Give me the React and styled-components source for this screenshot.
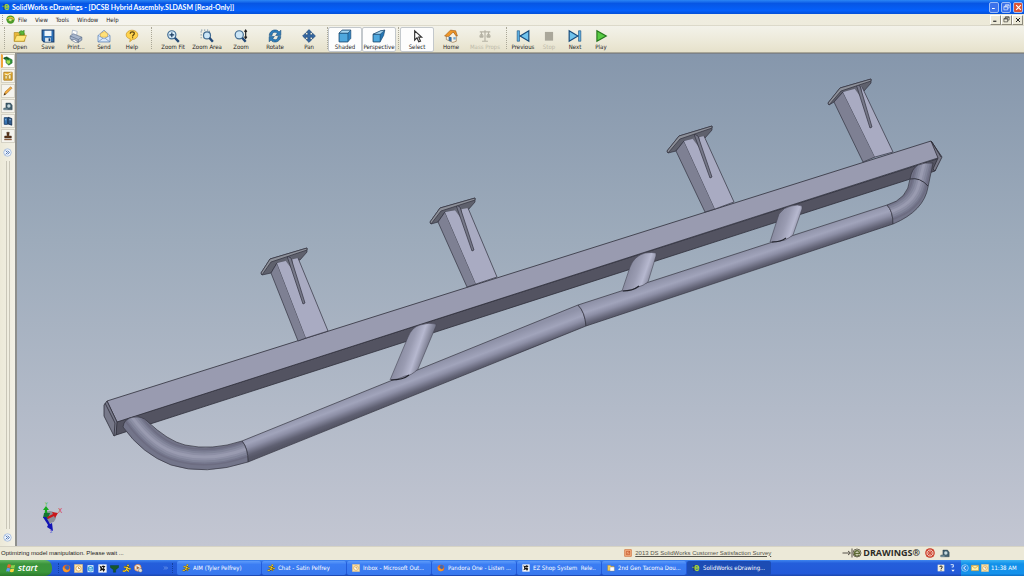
import styled, { createGlobalStyle } from "styled-components";

const GlobalStyle = createGlobalStyle`
    * {
        box-sizing: border-box;
    }

    body {
        margin: 0;
        font-family: "DejaVu Sans Condensed", "Liberation Sans", sans-serif;
        font-size: 6px;
        line-height: 8px;
        color: #222;
    }

    button {
        font: inherit;
        color: inherit;
        padding: 0;
        border: 0;
        background: none;
    }

    svg {
        display: block;
        flex-shrink: 0;
    }
`;

const Window = styled.div`
    height: 100vh;
    display: flex;
    flex-direction: column;
    background-color: #ece9d8;
    overflow: hidden;
`;

// title bar
const TitleBar = styled.header`
    height: 14px;
    flex-shrink: 0;
    display: flex;
    align-items: center;
    padding: 0 1px 0 2px;
    gap: 2px;
    background: linear-gradient(#2c86f5, #0756e4 25%, #0560fb 75%, #0450d8);

    h1 {
        flex: 1;
        margin: 0;
        color: white;
        font-family: "Lato", sans-serif;
        font-size: 7px;
        line-height: 10px;
        font-weight: 700;
        white-space: nowrap;
    }
`;

const CaptionBtn = styled.button`
    width: 10px;
    height: 11px;
    display: flex;
    align-items: center;
    justify-content: center;
    border: 1px solid #9dbcf5;
    border-radius: 2px;
    color: white;
    background: ${(props) => (props.$close ? "#dd5434" : "#3c72ea")};
`;

// menu
const MenuBar = styled.nav`
    height: 12px;
    flex-shrink: 0;
    display: flex;
    align-items: center;
    padding: 0 1px 0 2px;
    gap: 3px;
    background: linear-gradient(90deg, #f6f5f0, #ece9d8);
    border-bottom: 1px solid #dcd9ca;
`;

const MenuItems = styled.div`
    flex: 1;
    display: flex;
    gap: 8px;
`;

const ChildButtons = styled.div`
    display: flex;
`;

const ChildBtn = styled.button`
    width: 11px;
    height: 10px;
    display: flex;
    align-items: center;
    justify-content: center;
    border: 1px solid #fff;
    border-right-color: #8d8a7c;
    border-bottom-color: #8d8a7c;
`;

const Grip = styled.span`
    width: 1px;
    height: ${(props) => props.$height}px;
    margin: 0 ${(props) => props.$gap || 0}px;
    border-left: 1px dotted ${(props) => props.$color || "#aaa797"};
`;

// toolbar
const Toolbar = styled.div`
    height: 27px;
    flex-shrink: 0;
    display: flex;
    align-items: center;
    gap: 1px;
    padding-left: 3px;
    background: linear-gradient(#f3f2ea, #ece9d8 60%, #e6e1cb);
    border-bottom: 1px solid #a9a696;
`;

const ToolGroup = styled.div`
    display: flex;
`;

const ToolBtn = styled.button`
    width: ${(props) => props.$width}px;
    height: 25px;
    display: flex;
    flex-direction: column;
    align-items: center;
    justify-content: flex-end;
    white-space: nowrap;
    border: 1px solid ${(props) => (props.$pressed ? "#c3c8cc" : "transparent")};
    border-radius: 2px;
    background-color: ${(props) => (props.$pressed ? "#fdfdfd" : "transparent")};
    color: ${(props) => (props.disabled ? "#bdbaaa" : "#222")};
`;

// body
const Body = styled.div`
    flex: 1;
    min-height: 0;
    display: flex;
`;

const SideBar = styled.aside`
    width: 17px;
    flex-shrink: 0;
    display: flex;
    flex-direction: column;
    align-items: center;
    padding-top: 1px;
    background: linear-gradient(90deg, #ece9d8, #f3f1e6);
    border-right: 2px solid #8e8f8c;
`;

const SideTab = styled.button`
    width: 14px;
    height: 14px;
    margin-bottom: 1px;
    display: flex;
    align-items: center;
    justify-content: center;
    background-color: ${(props) => (props.$active ? "#fff" : "#f5f4ee")};
    border: 1px solid #d5d2c5;
    border-left: ${(props) => (props.$active ? "2px solid #f0a53c" : "1px solid #d5d2c5")};
`;

const Expander = styled.button`
    margin: 4px 0;
`;

const SideRail = styled.div`
    flex: 1;
    width: 4px;
    border-left: 1px solid #c9c6b8;
    border-right: 1px solid #c9c6b8;
`;

const Viewport = styled.main`
    flex: 1;
    min-width: 0;
    border-top: 1px solid #7c828a;
    background: linear-gradient(#8697ac, #9dabbb 38%, #b2bac8 72%, #c3c6d2);

    svg {
        width: 100%;
        height: 100%;
    }
`;

// status
const StatusBar = styled.footer`
    height: 14px;
    flex-shrink: 0;
    display: flex;
    align-items: center;
    padding: 0 74px 2px 1px;
    gap: 5px;
    border-top: 1px solid #d6d3c5;
    background-color: #ece9d8;
    font-family: "Liberation Sans", sans-serif;
    white-space: nowrap;

    p {
        flex: 1;
        margin: 0;
    }
`;

const Survey = styled.a`
    display: flex;
    align-items: center;
    gap: 3px;
    margin-right: 66px;
    color: #55534a;
`;

const Brand = styled.strong`
    display: flex;
    align-items: center;
    gap: 1px;
    font-family: "Open Sans", sans-serif;
    font-size: 9px;
    line-height: 10px;
    color: #2c2b27;
`;

// taskbar
const TaskBar = styled.div`
    height: 16px;
    flex-shrink: 0;
    display: flex;
    align-items: center;
    background: linear-gradient(#3f86f0, #245edb 20%, #2259d8 85%, #1b46ab);
    color: white;
`;

const StartBtn = styled.button`
    width: 52px;
    height: 16px;
    display: flex;
    align-items: center;
    gap: 2px;
    padding-left: 6px;
    border-radius: 0 7px 7px 0;
    background: linear-gradient(#64b765, #3b943b 25%, #3a963b 75%, #2b7a2c);
    color: white;
    font-family: "Open Sans", sans-serif;
    font-size: 9px;
    line-height: 12px;
    font-weight: 600;
    font-style: italic;
`;

const QuickLaunch = styled.div`
    width: 115px;
    display: flex;
    align-items: center;
    gap: 3px;
    margin: 0 4px 0 6px;
`;

const More = styled.span`
    margin-left: auto;
`;

const Tasks = styled.div`
    flex: 1;
    display: flex;
    gap: 1px;
`;

const TaskBtn = styled.button`
    flex: 0 1 84px;
    min-width: 0;
    height: 14px;
    display: flex;
    align-items: center;
    gap: 3px;
    padding: 0 5px;
    border-radius: 2px;
    background: ${(props) => (props.$active ? "#1c4cb4" : "linear-gradient(#5d9bfa, #3b7df3 25%, #3878ee)")};

    span {
        overflow: hidden;
        white-space: pre;
    }
`;

const TrayTools = styled.div`
    display: flex;
    align-items: center;
    gap: 4px;
    margin-right: 4px;
`;

const Tray = styled.div`
    width: 63px;
    height: 16px;
    display: flex;
    align-items: center;
    gap: 2px;
    background: linear-gradient(#3bb4f4, #1290e9 25%, #1492ec 85%, #0e6fc4);
`;

const ICONS = {
    open: (
        <>
            <path d="M2 6h7l2 2h9v13H2z" fill="#e9b93c" stroke="#a67c14" />
            <path d="M6 11h17l-4 10H2z" fill="#ffe67a" stroke="#b08516" />
            <path d="M10 7c1-4 5-5 7-3l2-2v8h-8l3-2c-1-1-2-1-4-1z" fill="#5cb83a" stroke="#2f7d1c" />
        </>
    ),
    save: (
        <>
            <path d="M2 2h20v20H5l-3-3z" fill="#2b6fb5" stroke="#173f73" strokeWidth="2" />
            <path d="M6 3h12v9H6z" fill="#eef5fb" />
            <path d="M7 15h10v7H7z" fill="#dde6ee" />
            <path d="M13 16h3v5h-3z" fill="#173f73" />
        </>
    ),
    print: (
        <>
            <path d="M6 2l8 2-1 8-8-3z" fill="#fff" stroke="#8296b5" />
            <path d="M2 12l5-4 15 6v5l-6 4L2 17z" fill="#a7b5cc" stroke="#50627f" />
            <path d="M2 12l14 6 6-4M16 18v5" fill="none" stroke="#50627f" />
            <path d="M9 18l7 4-5 1-7-4z" fill="#fff" stroke="#50627f" />
        </>
    ),
    send: (
        <>
            <path d="M2 11L12 2l10 9v11H2z" fill="#dfebfa" stroke="#4d75ad" />
            <path d="M6 8l7-4 5 4v6H6z" fill="#ffe17a" stroke="#d69e2c" />
            <path d="M2 11v11h20V11l-10 6z" fill="#dbe9fa" stroke="#5f86bb" />
            <path d="M2 22l8-6M22 22l-8-6" fill="none" stroke="#4d75ad" />
        </>
    ),
    help: (
        <>
            <path d="M12 2c6 0 10 4 10 8s-4 8-9 8l-5 4 1-5c-4-1-7-3-7-7 0-4 4-8 10-8z" fill="#ffd34d" stroke="#bd8614" />
            <path d="M9 8c0-4 7-4 7 0 0 2-3 2-3 5" fill="none" stroke="#594311" strokeWidth="2" />
            <path d="M12 14h2v2h-2z" fill="#594311" />
        </>
    ),
    zoomFit: (
        <>
            <circle cx="10" cy="10" r="7" fill="#d8ecf9" stroke="#416b91" strokeWidth="2" />
            <path d="M15 15l7 7" stroke="#234a79" strokeWidth="4" />
            <path d="M10 6v8M6 10h8" stroke="#16395f" strokeWidth="2" fill="none" />
        </>
    ),
    zoomArea: (
        <>
            <path d="M2 2h14v13H2z" fill="none" stroke="#8298ad" strokeWidth="2" strokeDasharray="2 3" />
            <circle cx="12" cy="11" r="6" fill="#cce6f7" stroke="#416b91" strokeWidth="2" />
            <path d="M16 15l6 7" stroke="#234a79" strokeWidth="4" />
        </>
    ),
    zoom: (
        <>
            <circle cx="9" cy="10" r="7" fill="#cce6f7" stroke="#416b91" strokeWidth="2" />
            <path d="M14 15l6 7" stroke="#234a79" strokeWidth="4" />
            <path d="M20 2v14M18 5l2-3 2 3M18 13l2 3 2-3" stroke="#222" fill="none" strokeWidth="2" />
        </>
    ),
    rotate: (
        <>
            <path d="M2 11C3 1 15-1 19 5l3-3v9h-9l3-3C13 4 7 5 7 11z" fill="#2f7db8" stroke="#174b7c" />
            <path d="M22 13c-1 10-13 12-17 6l-3 3v-9h9l-3 3c3 4 9 3 9-3z" fill="#2f7db8" stroke="#174b7c" />
        </>
    ),
    pan: (
        <path
            d="M12 1l5 5h-3v4h4V7l5 5-5 5v-3h-4v4h3l-5 5-5-5h3v-4H6v3l-5-5 5-5v3h4V6H7z"
            fill="#3568a3"
            stroke="#17406f"
        />
    ),
    shaded: (
        <>
            <path d="M2 7l5-5h15v14l-5 6H2z" fill="#2e84c4" stroke="#153f65" />
            <path d="M2 7h15v15H2z" fill="#4fa8de" stroke="#153f65" />
            <path d="M2 7l5-5h15l-5 5z" fill="#a5d7f3" stroke="#153f65" />
        </>
    ),
    perspective: (
        <>
            <path d="M2 9L15 3l7-1-2 9-6 11H2z" fill="#2476b4" stroke="#153f65" />
            <path d="M2 9h12v13H2z" fill="#4fa8de" stroke="#153f65" />
            <path d="M2 9l13-6 7-1-8 7z" fill="#a5d7f3" stroke="#153f65" />
        </>
    ),
    select: <path d="M8 3v16l4-4 3 7 3-1-3-7h5z" fill="#fff" stroke="#333" strokeWidth="2" />,
    home: (
        <>
            <path d="M4 11l10-8 7 8v10l-6 2-11-5z" fill="#f6f1e4" stroke="#8a6231" />
            <path d="M1 12L11 2l9 1 3 9-3-1-4-6-8 8z" fill="#ef9626" stroke="#9c5410" />
            <path d="M8 13l5 1v8l-5-2z" fill="#386fa5" />
            <path d="M16 14h4v4h-4z" fill="#71a9d5" />
        </>
    ),
    mass: (
        <path
            d="M12 2v20M3 5h18M6 5v7M18 5v7M2 12h8M14 12h8M3 14h6M15 14h6M7 21h10M8 9l-2 3-2-3M20 9l-2 3-2-3"
            fill="none"
            stroke="#b5b2a4"
            strokeWidth="2"
        />
    ),
    previous: (
        <>
            <path d="M2 3h4v18H2z" fill="#5aaee2" stroke="#174b7c" />
            <path d="M22 3v18L7 12z" fill="#71c3ed" stroke="#174b7c" strokeWidth="2" />
        </>
    ),
    stop: <path d="M5 5h14v15H5z" fill="#aaa79a" />,
    next: (
        <>
            <path d="M18 3h4v18h-4z" fill="#5aaee2" stroke="#174b7c" />
            <path d="M2 3v18l15-9z" fill="#71c3ed" stroke="#174b7c" strokeWidth="2" />
        </>
    ),
    play: <path d="M5 3v18l16-9z" fill="#58cb43" stroke="#24761b" strokeWidth="2" />,
    edrawings: (
        <>
            <path d="M1 10h7" stroke="#9bd34c" strokeWidth="3" />
            <path d="M8 12h12c0-10-12-9-12 0 0 9 10 9 12 4" fill="none" stroke="#a9d836" strokeWidth="4" />
            <path d="M6 3v18" stroke="#223" strokeWidth="2" />
        </>
    ),
    document: (
        <>
            <circle cx="12" cy="12" r="11" fill="#4b9c28" />
            <path d="M2 11c5-9 16-8 20 0l-8 3-6-4z" fill="#f1c438" />
            <path d="M8 8l9 2-3 8-8-3z" fill="#d3ed87" stroke="#2c671b" />
        </>
    ),
    model: (
        <>
            <path d="M1 5l8-3 13 7v8l-8 5-7-6V11z" fill="#34963c" stroke="#174c20" />
            <path d="M9 10l8 1v6l-5 2-4-4z" fill="#a4dc4f" />
            <path d="M2 6l6-2 6 4" stroke="#174c20" strokeWidth="3" fill="none" />
        </>
    ),
    sheets: (
        <>
            <path d="M2 3h20v19H2z" fill="#f3bb35" stroke="#a77416" strokeWidth="2" />
            <path d="M5 11h5v8H5zM13 9h6v10h-6z" fill="#fff3bb" stroke="#765515" />
            <path d="M4 7l7 2 9-5" stroke="#fff" strokeWidth="2" fill="none" />
        </>
    ),
    pencil: (
        <>
            <path d="M2 22l3-8L18 2l4 3L9 18z" fill="#f0ab3f" stroke="#935b1a" />
            <path d="M2 22l2-5 3 3z" fill="#30230f" />
        </>
    ),
    measure: (
        <>
            <path d="M7 5h11l4 5v11H2v-4h5z" fill="#43606f" stroke="#1d3441" />
            <circle cx="14" cy="12" r="4" fill="#c7d9df" />
            <path d="M1 18h10v3H1z" fill="#7f9aa5" />
        </>
    ),
    section: (
        <>
            <path d="M3 4h8v16H3z" fill="#3a76b4" stroke="#173c66" strokeWidth="2" />
            <path d="M12 3l9 3v16l-9-3z" fill="#315c8d" stroke="#122e50" strokeWidth="2" />
            <path d="M15 9h4M5 9h3" stroke="#b4d6ef" strokeWidth="2" />
        </>
    ),
    stamp: (
        <>
            <path d="M9 3h6l-1 9h6v5H4v-5h6z" fill="#60391f" stroke="#2c190b" />
            <path d="M3 19h18v3H3z" fill="#8a5c40" />
        </>
    ),
    expand: (
        <>
            <circle cx="12" cy="12" r="10" fill="#edf4fd" stroke="#9cb6db" strokeWidth="2" />
            <path d="M7 7l5 5-5 5M12 7l5 5-5 5" fill="none" stroke="#24509a" strokeWidth="2" />
        </>
    ),
    flag: (
        <>
            <path d="M4 4c3-2 5-1 8 0l-2 8c-3-1-5-2-8 0z" fill="#ef6331" />
            <path d="M13 5c3 1 5 1 9-1l-2 8c-3 2-6 1-9 0z" fill="#8fd14b" />
            <path d="M2 13c3-2 5-1 8 0l-2 8c-3-1-5-2-8 0z" fill="#5d9cf0" />
            <path d="M11 14c3 1 5 1 9-1l-2 8c-3 2-6 1-9 0z" fill="#fbd33b" />
        </>
    ),
    firefox: (
        <>
            <circle cx="12" cy="12" r="10" fill="#e76722" />
            <circle cx="14" cy="9" r="6" fill="#3a6abb" />
            <path d="M3 6c1 8 7 5 9 10 3 1 6 0 9-4-1 6-5 10-10 10C4 21 0 13 3 6z" fill="#f39a2b" />
        </>
    ),
    outlook: (
        <>
            <path d="M1 1h22v22H1z" fill="#f9e3ab" stroke="#e9b560" />
            <circle cx="12" cy="12" r="7" fill="#fffbe8" stroke="#dd9c3d" strokeWidth="2" />
            <path d="M12 8v4h4" fill="none" stroke="#b07b2c" strokeWidth="2" />
        </>
    ),
    explorer: (
        <>
            <path d="M4 3h16v19H4z" fill="#d9effb" />
            <path d="M6 13h12c0-9-12-8-12 0 0 7 9 7 12 3" fill="none" stroke="#3aa5dc" strokeWidth="3" />
        </>
    ),
    shop: (
        <>
            <path d="M1 1h22v22H1z" fill="#f8f8f8" />
            <path d="M4 4l5 3 4-3 7 2-5 5 4 3-4 7-3-5-8 3 3-6z" fill="#111" />
            <circle cx="12" cy="10" r="2" fill="#fff" />
        </>
    ),
    tree: <path d="M1 4h22v5l-8 6v7H9v-7L1 9z" fill="#165829" stroke="#0b3b24" />,
    aim: (
        <>
            <circle cx="16" cy="4" r="3" fill="#fbd62e" stroke="#50420a" />
            <path d="M5 8l9 1-2 5 6 6M12 14l-4 5H2M13 9l6 4h4" fill="none" stroke="#50420a" strokeWidth="5" />
            <path d="M5 8l9 1-2 5 6 6M12 14l-4 5H2M13 9l6 4h4" fill="none" stroke="#fbd62e" strokeWidth="3" />
        </>
    ),
    player: (
        <>
            <circle cx="10" cy="10" r="9" fill="#f0e9de" stroke="#df7b33" strokeWidth="2" />
            <path d="M7 5v10l8-5z" fill="#a26539" />
            <circle cx="17" cy="17" r="5" fill="#ddd" stroke="#555" />
        </>
    ),
    folder: (
        <>
            <path d="M2 4h8l2 3h9v13H2z" fill="#f6ce5c" stroke="#a77a1a" />
            <path d="M9 9h13v12H9z" fill="#fff" stroke="#8a7f67" />
        </>
    ),
    mail: (
        <>
            <path d="M1 4h22v16H1z" fill="#fff1a8" stroke="#d79f32" strokeWidth="2" />
            <path d="M2 5l10 8 10-8" fill="none" stroke="#c18c2d" strokeWidth="2" />
        </>
    ),
    back: (
        <>
            <circle cx="12" cy="12" r="10" fill="#2b8ce8" stroke="#b6e0fb" strokeWidth="2" />
            <path d="M14 6l-6 6 6 6" stroke="#fff" strokeWidth="3" fill="none" />
        </>
    ),
    keyboard: (
        <>
            <path d="M2 2h20v20H2z" fill="#f2ecd9" />
            <path d="M8 9c0-4 8-4 8 0 0 3-4 3-4 6M12 17v3" fill="none" stroke="#222" strokeWidth="3" />
        </>
    ),
    arrows: (
        <>
            <path d="M5 2h8v7H8" fill="none" stroke="#d7e5fb" strokeWidth="3" />
            <path d="M7 17h10l-5 6z" fill="#fff" />
        </>
    ),
    survey: (
        <>
            <path d="M2 2h20v20H2z" fill="#f8b68a" stroke="#c9602b" strokeWidth="2" />
            <path d="M7 7h10v10H7zM10 12l2 2 5-7" fill="none" stroke="#b9481c" strokeWidth="2" />
        </>
    ),
    target: (
        <>
            <circle cx="12" cy="12" r="10" fill="#f2c7ba" stroke="#ca3b28" strokeWidth="3" />
            <circle cx="12" cy="12" r="5" fill="none" stroke="#ca3b28" strokeWidth="2" />
            <path d="M4 4l16 16M20 4L4 20" stroke="#ca3b28" strokeWidth="2" />
        </>
    ),
    minimize: <path d="M4 18h11" stroke="currentColor" strokeWidth="4" />,
    restore: <path d="M8 8V3h13v11h-5M3 9h13v11H3zM3 10h13M8 4h13" fill="none" stroke="currentColor" strokeWidth="2" />,
    close: <path d="M4 4l16 16M20 4L4 20" stroke="currentColor" strokeWidth="4" />,
    chevrons: <path d="M4 6l6 6-6 6M12 6l6 6-6 6" fill="none" stroke="#b5d0fa" strokeWidth="2" />,
};

function Icon({ name, size }) {
    return (
        <svg width={size} height={size} viewBox="0 0 24 24" aria-hidden="true">
            {ICONS[name]}
        </svg>
    );
}

const TOOL_GROUPS = [
    {
        width: 28,
        gap: 1,
        items: [
            ["open", "Open"],
            ["save", "Save"],
            ["print", "Print..."],
            ["send", "Send"],
            ["help", "Help"],
        ],
    },
    {
        width: 34,
        gap: 4,
        items: [
            ["zoomFit", "Zoom Fit"],
            ["zoomArea", "Zoom Area"],
            ["zoom", "Zoom"],
            ["rotate", "Rotate"],
            ["pan", "Pan"],
        ],
    },
    {
        width: 34,
        gap: 0,
        items: [
            ["shaded", "Shaded", "pressed"],
            ["perspective", "Perspective", "pressed"],
        ],
    },
    {
        width: 34,
        gap: 1,
        items: [
            ["select", "Select", "pressed"],
            ["home", "Home"],
            ["mass", "Mass Props", "disabled"],
        ],
    },
    {
        width: 26,
        gap: 3,
        items: [
            ["previous", "Previous"],
            ["stop", "Stop", "disabled"],
            ["next", "Next"],
            ["play", "Play"],
        ],
    },
];

const SIDE_TABS = [
    ["model", "Components"],
    ["sheets", "Sheets"],
    ["pencil", "Markup"],
    ["measure", "Measure"],
    ["section", "Section"],
    ["stamp", "Stamp"],
];

const QUICK = ["firefox", "outlook", "explorer", "shop", "tree", "aim", "player"];

const TASKS = [
    ["aim", "AIM (Tyler Pelfrey)"],
    ["aim", "Chat - Satin Pelfrey"],
    ["outlook", "Inbox - Microsoft Out..."],
    ["firefox", "Pandora One - Listen ..."],
    ["shop", "EZ Shop System  Rele..."],
    ["folder", "2nd Gen Tacoma Dou..."],
    ["edrawings", "SolidWorks eDrawing..."],
];

// tip / corner / right: mounting plate, the rest: post outline and gusset
const POSTS = [
    { tip: [261, 273], corner: [270, 259], right: [307, 248], side: [271, 273], edge: [277, 263], top: [298, 258], baseL: [298, 341], baseM: [306, 338], baseR: [328, 331], rib: [287, 256], ribTip: [304, 304] },
    { tip: [430, 222], corner: [440, 208], right: [475, 198], side: [438, 222], edge: [445, 212], top: [468, 208], baseL: [467, 287], baseM: [476, 284], baseR: [497, 277], rib: [456, 205], ribTip: [473, 251] },
    { tip: [667, 151], corner: [679, 136], right: [712, 126], side: [676, 151], edge: [684, 141], top: [704, 136], baseL: [705, 212], baseM: [715, 209], baseR: [734, 202], rib: [694, 134], ribTip: [711, 178] },
    { tip: [828, 103], corner: [840, 88], right: [871, 79], side: [834, 102], edge: [843, 92], top: [862, 87], baseL: [863, 162], baseM: [875, 157], baseR: [893, 152], rib: [856, 84], ribTip: [871, 128] },
];

const points = (...list) => list.map((p) => p.join(",")).join(" ");

function Post({ post }) {
    const { tip, corner, right, side, edge, top, baseL, baseM, baseR, rib, ribTip } = post;
    return (
        <g stroke="#30313d" strokeWidth="0.7" strokeLinejoin="round">
            <polygon
                points={points(tip, corner, right, [right[0], right[1] + 4], [right[0] - 7, right[1] + 12], edge, side, [tip[0] + 1, tip[1] + 2])}
                fill="#5f616d"
            />
            <polygon points={points(side, edge, baseM, baseL)} fill="#7e8093" />
            <polygon points={points(edge, top, baseR, baseM)} fill="#a9abc2" stroke="none" />
            <polyline points={points(top, baseR, baseM)} fill="none" />
            <polygon points={points([rib[0] - 2, rib[1] + 4], [rib[0] + 5, rib[1] + 1], [rib[0] + 7, rib[1] + 16])} fill="#696b79" stroke="none" />
            <polygon points={points(rib, [rib[0] + 4, rib[1] + 2], [ribTip[0] + 1, ribTip[1] - 1], [ribTip[0] - 1, ribTip[1]])} fill="#777989" />
            <polygon
                points={points(tip, corner, right, [right[0], right[1] + 2], [corner[0] + 1, corner[1] + 3], [tip[0] + 1, tip[1] + 2])}
                fill="#8d9099"
            />
        </g>
    );
}

const STRUTS = [
    { d: "M390 380L408 337Q412 327 420 325Q429 322 436 324V326L418 369Q411 376 405 376Q398 380 390 380Z", joint: "M391 380Q403 380 409 375", x: 397, y: 352 },
    { d: "M622 291L630 267Q634 256 645 253Q652 252 656 253V256L648 282Q643 286 638 287Q632 291 622 291Z", joint: "M623 291Q633 291 639 286", x: 626, y: 271 },
    { d: "M770 242L779 214Q784 207 791 206Q798 204 802 206V209L793 235Q789 238 785 240Q778 242 770 242Z", joint: "M772 242Q781 242 786 238", x: 774, y: 223 },
];

const LEFT_BEND =
    "M123 427Q124 418 134 417Q142 416 147 421Q168 441 185 445Q212 451 242 441Q248 448 248 462Q205 476 171 465Q142 454 123 427Z";
const RIGHT_BEND =
    "M887 205Q908 199 910 179Q912 168 918 165Q925 162 933 163L928 187Q924 211 893 224Q893 211 887 205Z";

const BEND_SHADES = [
    ["#6b6c80", 17],
    ["#777990", 14],
    ["#85879c", 11],
    ["#9092a7", 7],
    ["#9c9eb3", 3],
];

function Bend({ id, outline, spine }) {
    return (
        <g>
            <clipPath id={id}>
                <path d={outline} />
            </clipPath>
            <path d={outline} fill="#73758a" />
            <g clipPath={`url(#${id})`} fill="none" strokeOpacity="0.8">
                {BEND_SHADES.map(([color, width]) => (
                    <path key={color} d={spine} stroke={color} strokeWidth={width} />
                ))}
            </g>
            <path d={outline} fill="none" stroke="#33343f" strokeWidth="0.7" />
        </g>
    );
}

function TubeStops() {
    return (
        <>
            <stop offset="0" stopColor="#8f92a8" />
            <stop offset="0.35" stopColor="#a1a4bb" />
            <stop offset="0.55" stopColor="#8d8fa6" />
            <stop offset="0.85" stopColor="#5f6072" />
            <stop offset="1" stopColor="#555666" />
        </>
    );
}

function Model() {
    return (
        <svg viewBox="17 54 1007 492" preserveAspectRatio="xMidYMid meet" role="img" aria-label="Hybrid assembly">
            <defs>
                <linearGradient id="tubeA" gradientUnits="userSpaceOnUse" x1="410" y1="373" x2="418" y2="394">
                    <TubeStops />
                </linearGradient>
                <linearGradient id="tubeB" gradientUnits="userSpaceOnUse" x1="733" y1="255" x2="740" y2="276">
                    <TubeStops />
                </linearGradient>
                {STRUTS.map((strut, i) => (
                    <linearGradient key={i} id={`strut${i}`} gradientUnits="userSpaceOnUse" x1={strut.x} y1={strut.y} x2={strut.x + 26} y2={strut.y + 9}>
                        <stop offset="0" stopColor="#85879c" />
                        <stop offset="0.4" stopColor="#9a9cb2" />
                        <stop offset="0.68" stopColor="#b6b8cf" />
                        <stop offset="1" stopColor="#77798c" />
                    </linearGradient>
                ))}
            </defs>

            {/* main beam */}
            <g stroke="#2e2f3a" strokeWidth="0.8" strokeLinejoin="round">
                <polygon points="116,422 940,158 935,171 116,435" fill="#535361" />
                <polygon points="107,401 931,141 941,157 117,422" fill="#999bb0" />
                <polygon points="104,405 107,401 117,422 116,435 114,436 104,416" fill="#77798a" />
                <path d="M105 403L115 423L114 436" fill="none" />
                <polygon points="931,141 942,157 935,171 933,169 938,158" fill="#777887" />
                <path d="M932 142L941 157" />
            </g>

            {POSTS.map((post) => (
                <Post key={post.tip[0]} post={post} />
            ))}

            {/* step rail */}
            <g stroke="#33343f" strokeWidth="0.7">
                <path d="M242 441L578 305Q585 312 586 326L248 462Q248 448 242 441Z" fill="url(#tubeA)" />
                <path d="M578 305L887 205Q893 211 893 224L586 326Q585 312 578 305Z" fill="url(#tubeB)" />
            </g>
            <Bend id="leftBend" outline={LEFT_BEND} spine="M132 417Q154 448 180 454Q211 462 246 449" />
            <Bend id="rightBend" outline={RIGHT_BEND} spine="M887 213Q914 205 919 184L925 160" />
            <path d="M910 179Q920 177 928 186" fill="none" stroke="#33343f" />

            {STRUTS.map((strut, i) => (
                <g key={i}>
                    <path d={strut.d} fill={`url(#strut${i})`} stroke="#464756" strokeWidth="0.6" />
                    <path d={strut.joint} fill="none" stroke="#22232c" strokeWidth="1.2" />
                </g>
            ))}

            {/* orientation triad */}
            <circle cx="50" cy="517" r="6" fill="#8d9098" />
            <path d="M44 518l1-8h-2l3-4 3 4h-2l1 8z" fill="#15a91e" />
            <path d="M44 513h6l-2 6-5-1z" fill="#167434" />
            <path d="M47 517l6-3-1-2 6 1-3 5-1-2-6 3z" fill="#c9171b" />
            <path d="M43 517l5 8-1 2 6 4-1-8-2 1-4-7z" fill="#1214b5" />
            <text x="45" y="506" fontSize="5" fill="#2cc338">Y</text>
            <text x="58" y="513" fontSize="7" fill="#d63a45">X</text>
            <text x="50" y="533" fontSize="4" fill="#3339d5">Z</text>
        </svg>
    );
}

function App() {
    return (
        <Window>
            <GlobalStyle />
            <TitleBar>
                <Icon name="edrawings" size={8} />
                <h1>SolidWorks eDrawings - [DCSB Hybrid Assembly.SLDASM [Read-Only]]</h1>
                <CaptionBtn aria-label="Minimize">
                    <Icon name="minimize" size={6} />
                </CaptionBtn>
                <CaptionBtn aria-label="Restore">
                    <Icon name="restore" size={7} />
                </CaptionBtn>
                <CaptionBtn $close aria-label="Close">
                    <Icon name="close" size={7} />
                </CaptionBtn>
            </TitleBar>

            <MenuBar>
                <Grip $height={9} />
                <Icon name="document" size={9} />
                <MenuItems>
                    {["File", "View", "Tools", "Window", "Help"].map((item) => (
                        <button key={item}>{item}</button>
                    ))}
                </MenuItems>
                <ChildButtons>
                    <ChildBtn aria-label="Minimize document">
                        <Icon name="minimize" size={7} />
                    </ChildBtn>
                    <ChildBtn aria-label="Restore document">
                        <Icon name="restore" size={7} />
                    </ChildBtn>
                    <ChildBtn aria-label="Close document">
                        <Icon name="close" size={6} />
                    </ChildBtn>
                </ChildButtons>
            </MenuBar>

            <Toolbar>
                {TOOL_GROUPS.map((group, i) => (
                    <ToolGroup key={i}>
                        <Grip $height={22} $gap={group.gap} />
                        {group.items.map(([icon, label, state]) => (
                            <ToolBtn
                                key={icon}
                                $width={group.width}
                                $pressed={state === "pressed"}
                                disabled={state === "disabled"}
                            >
                                <Icon name={icon} size={14} />
                                {label}
                            </ToolBtn>
                        ))}
                    </ToolGroup>
                ))}
            </Toolbar>

            <Body>
                <SideBar>
                    {SIDE_TABS.map(([icon, label], i) => (
                        <SideTab key={icon} $active={i === 0} aria-label={label}>
                            <Icon name={icon} size={10} />
                        </SideTab>
                    ))}
                    <Expander aria-label="Expand panel">
                        <Icon name="expand" size={9} />
                    </Expander>
                    <SideRail />
                    <Expander aria-label="Expand lower panel">
                        <Icon name="expand" size={9} />
                    </Expander>
                </SideBar>
                <Viewport>
                    <Model />
                </Viewport>
            </Body>

            <StatusBar>
                <p>Optimizing model manipulation. Please wait ...</p>
                <Survey href="#survey">
                    <Icon name="survey" size={8} />
                    2013 DS SolidWorks Customer Satisfaction Survey
                </Survey>
                <Brand>
                    <svg width="20" height="10" viewBox="0 0 40 20" aria-hidden="true">
                        <path d="M1 10h15M12 6l5 4-5 4M20 1v18" fill="none" stroke="#56524a" strokeWidth="2" />
                        <path d="M25 11h10c0-8-10-7-10 0s8 6 10 3" fill="none" stroke="#5d6b35" strokeWidth="3" />
                        <circle cx="30" cy="10" r="8" fill="none" stroke="#6d6a59" strokeWidth="2" />
                    </svg>
                    DRAWINGS®
                </Brand>
                <Icon name="target" size={10} />
                <Icon name="measure" size={10} />
            </StatusBar>

            <TaskBar>
                <StartBtn>
                    <Icon name="flag" size={10} />
                    start
                </StartBtn>
                <QuickLaunch>
                    <Grip $height={10} $color="#12409f" />
                    {QUICK.map((name) => (
                        <Icon key={name} name={name} size={9} />
                    ))}
                    <More>
                        <Icon name="chevrons" size={6} />
                    </More>
                    <Grip $height={10} $color="#12409f" />
                </QuickLaunch>
                <Tasks>
                    {TASKS.map(([icon, label], i) => (
                        <TaskBtn key={label} $active={i === TASKS.length - 1}>
                            <Icon name={icon} size={8} />
                            <span>{label}</span>
                        </TaskBtn>
                    ))}
                </Tasks>
                <TrayTools>
                    <Icon name="keyboard" size={8} />
                    <Icon name="arrows" size={8} />
                </TrayTools>
                <Tray>
                    <Icon name="back" size={8} />
                    <Icon name="mail" size={8} />
                    <Icon name="outlook" size={8} />
                    <time>11:38 AM</time>
                </Tray>
            </TaskBar>
        </Window>
    );
}

export default App;
